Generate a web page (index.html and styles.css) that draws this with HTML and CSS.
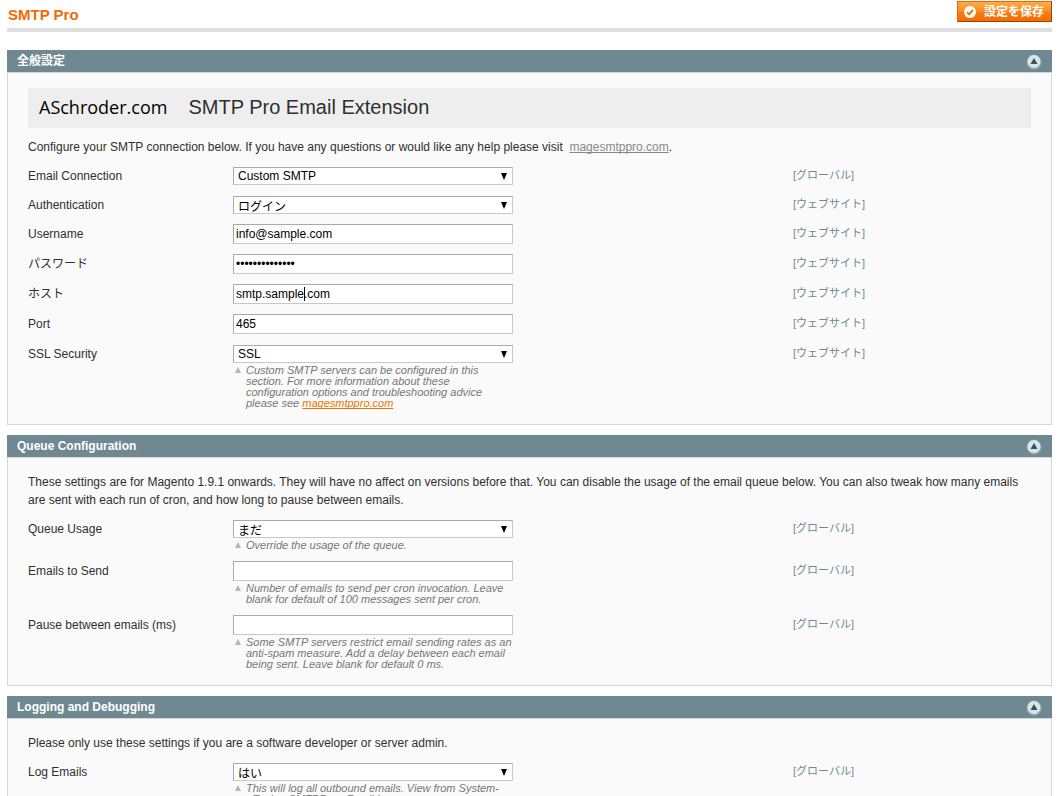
FILE: index.html
```html
<!DOCTYPE html>
<html lang="ja">
<head>
  <meta charset="UTF-8">
  <title>SMTP Pro</title>
  <meta name="viewport" content="width=device-width, initial-scale=1.0">
  <link rel="stylesheet" href="styles.css">
</head>
<body>

  <header class="content-header">
    <h1>SMTP Pro</h1>
    <button class="save-button" type="submit" form="config-form">
      <svg width="14" height="14" viewBox="0 0 14 14" aria-hidden="true">
        <circle cx="7" cy="7" r="6" fill="#fff"/>
        <path d="M4 7.2l2.2 2.2L10 5" fill="none" stroke="#ee7412" stroke-width="2"/>
      </svg>
      <span>設定を保存</span>
    </button>
  </header>

  <form id="config-form">

    <section class="section">
      <div class="section-head">
        <h2>全般設定</h2>
        <svg class="toggle" width="16" height="16" viewBox="0 0 16 16" aria-hidden="true">
          <circle cx="8" cy="8" r="7.5" fill="#8fa9af"/>
          <circle cx="8" cy="7.5" r="6.5" fill="#d9e6e5"/>
          <path d="M8 4l3.5 6h-7z" fill="#2f5560"/>
        </svg>
      </div>
      <div class="fieldset">
        <div class="banner">
          <span class="banner-logo">ASchroder.com</span>
          <span class="banner-title">SMTP Pro Email Extension</span>
        </div>
        <p class="comment">Configure your SMTP connection below. If you have any questions or would like any help please visit &nbsp;<a href="#">magesmtppro.com</a>.</p>

        <div class="row">
          <label for="option">Email Connection</label>
          <div class="value">
            <div class="select"><select id="option"><option>Custom SMTP</option></select></div>
          </div>
          <span class="scope">[グローバル]</span>
        </div>
        <div class="row">
          <label for="authentication">Authentication</label>
          <div class="value">
            <div class="select"><select id="authentication" class="ja"><option>ログイン</option></select></div>
          </div>
          <span class="scope">[ウェブサイト]</span>
        </div>
        <div class="row">
          <label for="username">Username</label>
          <div class="value"><input id="username" type="text" value="info@sample.com"></div>
          <span class="scope">[ウェブサイト]</span>
        </div>
        <div class="row">
          <label for="password">パスワード</label>
          <div class="value"><input id="password" type="password" value="samplepassword" autocomplete="off"></div>
          <span class="scope">[ウェブサイト]</span>
        </div>
        <div class="row">
          <label for="host">ホスト</label>
          <div class="value editing"><input id="host" type="text" value="smtp.sample.com"></div>
          <span class="scope">[ウェブサイト]</span>
        </div>
        <div class="row">
          <label for="port">Port</label>
          <div class="value"><input id="port" type="text" value="465"></div>
          <span class="scope">[ウェブサイト]</span>
        </div>
        <div class="row">
          <label for="ssl">SSL Security</label>
          <div class="value">
            <div class="select"><select id="ssl"><option>SSL</option></select></div>
            <p class="note">Custom SMTP servers can be configured in this section. For more information about these configuration options and troubleshooting advice please see <a href="#">magesmtppro.com</a></p>
          </div>
          <span class="scope">[ウェブサイト]</span>
        </div>
      </div>
    </section>

    <section class="section">
      <div class="section-head">
        <h2>Queue Configuration</h2>
        <svg class="toggle" width="16" height="16" viewBox="0 0 16 16" aria-hidden="true">
          <circle cx="8" cy="8" r="7.5" fill="#8fa9af"/>
          <circle cx="8" cy="7.5" r="6.5" fill="#d9e6e5"/>
          <path d="M8 4l3.5 6h-7z" fill="#2f5560"/>
        </svg>
      </div>
      <div class="fieldset">
        <p class="comment">These settings are for Magento 1.9.1 onwards. They will have no affect on versions before that. You can disable the usage of the email queue below. You can also tweak how many emails are sent with each run of cron, and how long to pause between emails.</p>

        <div class="row">
          <label for="queue-usage">Queue Usage</label>
          <div class="value">
            <div class="select"><select id="queue-usage" class="ja"><option>まだ</option></select></div>
            <p class="note">Override the usage of the queue.</p>
          </div>
          <span class="scope">[グローバル]</span>
        </div>
        <div class="row">
          <label for="per-cron">Emails to Send</label>
          <div class="value">
            <input id="per-cron" type="text">
            <p class="note">Number of emails to send per cron invocation. Leave blank for default of 100 messages sent per cron.</p>
          </div>
          <span class="scope">[グローバル]</span>
        </div>
        <div class="row">
          <label for="pause">Pause between emails (ms)</label>
          <div class="value">
            <input id="pause" type="text">
            <p class="note">Some SMTP servers restrict email sending rates as an anti-spam measure. Add a delay between each email being sent. Leave blank for default 0 ms.</p>
          </div>
          <span class="scope">[グローバル]</span>
        </div>
      </div>
    </section>

    <section class="section">
      <div class="section-head">
        <h2>Logging and Debugging</h2>
        <svg class="toggle" width="16" height="16" viewBox="0 0 16 16" aria-hidden="true">
          <circle cx="8" cy="8" r="7.5" fill="#8fa9af"/>
          <circle cx="8" cy="7.5" r="6.5" fill="#d9e6e5"/>
          <path d="M8 4l3.5 6h-7z" fill="#2f5560"/>
        </svg>
      </div>
      <div class="fieldset">
        <p class="comment">Please only use these settings if you are a software developer or server admin.</p>

        <div class="row">
          <label for="log-emails">Log Emails</label>
          <div class="value">
            <div class="select"><select id="log-emails" class="ja"><option>はい</option></select></div>
            <p class="note">This will log all outbound emails. View from System-&gt;Tools-&gt;SMTPPro-&gt;Email Log.</p>
          </div>
          <span class="scope">[グローバル]</span>
        </div>
      </div>
    </section>

  </form>

</body>
</html>
```
FILE: styles.css
```css
* {
  box-sizing: border-box;
}
html, body {
  height: 100%;
  overflow: hidden;
}
body {
  margin: 0;
  padding: 0 10px 0 7px;
  background: #fff;
  color: #2f2f2f;
  font: 12px/18px "Liberation Sans", Arial, "Noto Sans CJK JP", sans-serif;
}
h1, h2, p {
  margin: 0;
}
a {
  text-decoration-skip-ink: none;
}

.content-header {
  display: flex;
  justify-content: space-between;
  align-items: flex-start;
  height: 32px;
  padding-top: 1px;
  margin-bottom: 18px;
  border-bottom: 4px solid #dfdfdf;
}
h1 {
  padding: 4px 0 0 1px;
  color: #f26b05;
  font-size: 15px;
  line-height: 20px;
}
.save-button {
  display: flex;
  align-items: center;
  gap: 7px;
  height: 21px;
  padding: 0 7px 0 5px;
  border: 1px solid;
  border-color: #ed6502 #a04300 #a04300 #ed6502;
  background: linear-gradient(#ffac47, #f98b25 50%, #f77c16 51%, #f36c05);
  color: #fff;
  font: bold 12px/18px "Liberation Sans", Arial, "Noto Sans CJK JP", sans-serif;
  cursor: pointer;
}

.section {
  margin-bottom: 10px;
}
.section-head {
  display: flex;
  justify-content: space-between;
  align-items: center;
  height: 22px;
  padding: 0 10px;
  background: #6f8992;
}
h2 {
  color: #fff;
  font-size: 12px;
  line-height: 18px;
}
.toggle {
  margin-top: 1px;
}
.fieldset {
  padding: 15px 20px 10px;
  border: 1px solid #d6d6d6;
  background: #fafafa;
}

.banner {
  display: flex;
  align-items: center;
  gap: 21px;
  height: 40px;
  margin-bottom: 10px;
  padding: 0 11px 2px;
  background: #eee;
}
.banner-logo {
  color: #000;
  font: 18px/38px "Open Sans", sans-serif;
}
.banner-title {
  font-size: 20px;
  line-height: 38px;
}
.comment {
  margin-bottom: 5px;
}
.comment a {
  color: #888;
}

.row {
  display: grid;
  grid-template-columns: 205px 280px 280px 1fr;
  padding: 5px 0;
}
.row label {
  padding-top: 1px;
}
.value {
  position: relative;
}
.scope {
  grid-column: 4;
  color: #6f8992;
  font-size: 11px;
}

input, select {
  display: block;
  width: 100%;
  border: 1px solid;
  border-color: #aaa #c8c8c8 #c8c8c8 #aaa;
  border-radius: 0;
  background: #fff;
  color: #000;
  font: 12px/16px "Liberation Sans", Arial, "Noto Sans CJK JP", sans-serif;
}
input {
  height: 20px;
  padding: 0 2px;
}
select {
  height: 18px;
  padding: 0 20px 0 4px;
  appearance: none;
}
.select {
  position: relative;
  padding-top: 1px;
}
.select::after {
  content: "";
  position: absolute;
  top: 7px;
  right: 6px;
  border: solid transparent;
  border-width: 7px 3px 0;
  border-top-color: #000;
  pointer-events: none;
}
.ja {
  padding-top: 2px;
}
/* text cursor */
.editing::after {
  content: "";
  position: absolute;
  top: 3px;
  left: 71px;
  width: 1px;
  height: 14px;
  background: #000;
}

.note {
  position: relative;
  margin-top: 2px;
  padding-left: 13px;
  color: #777;
  font-size: 11px;
  font-style: italic;
  line-height: 11px;
}
.note::before {
  content: "";
  position: absolute;
  top: 2px;
  left: 2px;
  border: solid transparent;
  border-width: 0 3px 6px;
  border-bottom-color: #a5bcbd;
}
.note a {
  color: #ea7601;
}
```
